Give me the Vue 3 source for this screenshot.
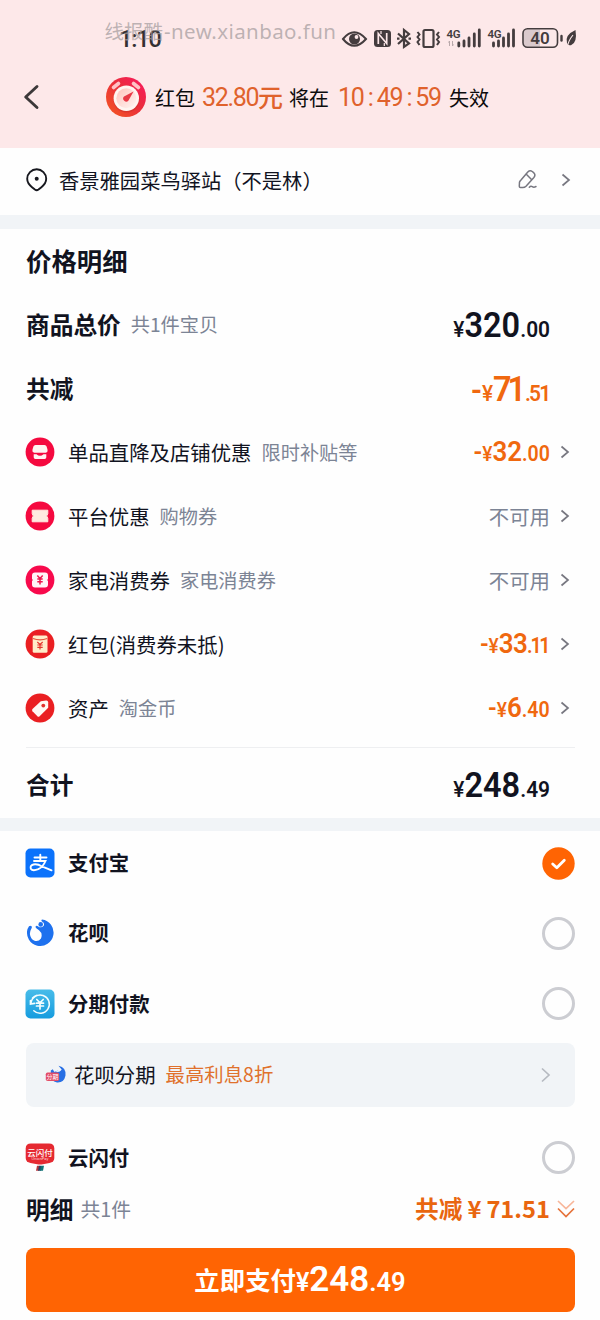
<script setup>
const discounts = [
  { icon: 'shop', color: '#f5093f', name: '单品直降及店铺优惠', note: '限时补贴等', int: '32', dec: '.00' },
  { icon: 'ticket', color: '#f5093f', name: '平台优惠', note: '购物券' },
  { icon: 'coupon', color: '#f80a4c', name: '家电消费券', note: '家电消费券' },
  { icon: 'packet', color: '#ea1f22', name: '红包(消费券未抵)', note: '', int: '33', dec: '.11' },
  { icon: 'tag', color: '#ea1f22', name: '资产', note: '淘金币', int: '6', dec: '.40' },
]
</script>

<template>
  <div class="page">
    <header class="top">
      <div class="status">
        <span class="clock">1:10</span>
        <svg class="status-icons" width="240" height="26" viewBox="340 25 240 26" fill="none" stroke="#443c3e">
          <path d="M343 39Q354 25.500 366 39Q354 52.500 343 39Z" stroke-width="2" />
          <circle cx="354.500" cy="39" r="5.500" fill="#443c3e" stroke="none" />
          <circle cx="356.500" cy="37" r="1.900" fill="#fde8e9" stroke="none" />
          <rect x="374" y="30" width="17" height="17" rx="3.500" fill="#443c3e" stroke="none" />
          <path d="M378.300 44V33.500L386.700 43.500V33" stroke="#fde8e9" stroke-width="1.700" />
          <path d="M381 31V34M384.300 43V46" stroke="#fde8e9" stroke-width="1.200" />
          <path d="M398 33.500L409 43.500L404 47V30L409 34L398 44" stroke-width="2.200" />
          <path d="M397 38.700h2.500M408.500 38.700h2.500" stroke-width="2.200" />
          <rect x="423.500" y="30" width="10" height="17" rx="1.500" stroke-width="2.200" />
          <path d="M417.500 32l2 2.500-2 2.500 2 2.500-2 2.500 2 3M439 32l-2 2.500 2 2.500-2 2.500 2 2.500-2 3" stroke-width="2" />
          <g fill="#443c3e" stroke="none" font-family="Roboto, sans-serif" font-size="11.500" font-weight="600">
            <text x="446.500" y="38" textLength="14">4G</text>
            <text x="487.500" y="38" textLength="14">4G</text>
          </g>
          <path d="M458.800 43v3M464 41v5M469 38v8M474.300 34v12M479.300 30v16M493.500 43v3M498.500 41v5M503.500 38v8M508.500 34v12M513.500 30v16" stroke-width="2.800" stroke-linecap="round" />
          <path d="M449.500 46v-5l-1 1.500M452.500 41v5l1-1.500" stroke="#b9a9ab" stroke-width="1" />
          <path d="M527 29.500h13v17h-13q-3.500 0-3.500-3.500v-10q0-3.500 3.500-3.500Z" fill="#dac9cc" stroke="none" />
          <rect x="523" y="28.800" width="34.500" height="18.400" rx="4.500" stroke-width="1.600" />
          <text x="540" y="44" text-anchor="middle" fill="#443c3e" stroke="none" font-family="Roboto, sans-serif" font-size="17" font-weight="600">40</text>
          <path d="M561.500 36v4.500" stroke-width="2.400" stroke-linecap="round" />
          <path d="M575.500 30Q577.500 43 571 45.200Q567.500 46 567 43Q564.500 35 575.500 30Z" fill="#443c3e" stroke="none" />
          <path d="M573 35Q568 41 567.500 47" stroke="#fde8e9" stroke-width="1.100" />
        </svg>
        <span class="watermark">线报酷<span>-new.xianbao.fun</span></span>
      </div>
      <div class="notice">
        <svg class="back" width="18" height="28" viewBox="0 0 18 28"><path d="M15 3.500L3.700 14 15 24.500" fill="none" stroke="#3c3839" stroke-width="2.900" stroke-linecap="round" stroke-linejoin="round" /></svg>
        <svg class="timer" width="42" height="42" viewBox="0 0 42 42">
          <defs>
            <linearGradient id="ring" x1="0" y1="1" x2="1" y2="0"><stop offset="0" stop-color="#f4591f" /><stop offset=".55" stop-color="#ea2d3c" /><stop offset="1" stop-color="#fb1762" /></linearGradient>
            <linearGradient id="dial" x1="0" y1="0" x2="1" y2="1"><stop offset="0" stop-color="#ffc3bc" /><stop offset="1" stop-color="#fff6f2" /></linearGradient>
          </defs>
          <circle cx="21" cy="21" r="20" fill="url(#ring)" />
          <path d="M8.500 11.500l5-4M28.500 7.500l5 4" stroke="#ffc2c5" stroke-width="3.600" stroke-linecap="round" />
          <circle cx="21.500" cy="23.500" r="13" fill="#c92b25" opacity=".5" />
          <circle cx="21.300" cy="22.300" r="12.700" fill="#fff5f0" />
          <circle cx="21.300" cy="22.300" r="10" fill="url(#dial)" />
          <path d="M28.500 15.500L23.500 24.500A3 3 0 1 1 19 20.500Z" fill="#e83945" />
        </svg>
        <span class="n-text">红包</span>
        <span class="n-num money">32.80</span>
        <span class="n-yuan">元</span>
        <span class="n-text when">将在</span>
        <span class="n-num clockdown"><i>10</i><i>:</i><i>49</i><i>:</i><i>59</i></span>
        <span class="n-text">失效</span>
      </div>
    </header>

    <section class="address">
      <svg width="22" height="24" viewBox="0 0 22 24" fill="none" stroke="#17181f" stroke-width="1.900"><path d="M6 19.200C3 16.800 1.200 14 1.200 10.800A9.500 9.500 0 0 1 20.200 10.800C20.200 14 18.400 16.800 15.400 19.200L12.500 21.600Q10.700 23 8.900 21.600Z" /><circle cx="10.700" cy="10.800" r="2" fill="#17181f" stroke="none" /></svg>
      <span class="addr-text">香景雅园菜鸟驿站（不是林）</span>
      <svg class="edit" width="20" height="22" viewBox="0 0 20 22" fill="none" stroke="#777780" stroke-width="1.500" stroke-linejoin="round" stroke-linecap="round"><path d="M1.500 13Q2 12 3 11L9.800 3Q12 .8 14.300 2.500L15.900 3.900Q17.900 6 15.900 8.400L8 17.300Q6.500 18.700 4.500 18.600H2.500Q1.200 18.500 1.300 17Z" /><path d="M8.300 5.300L13.500 10.500M11.300 18.200q1.500-1.500 3-.5t3.700-.2" /></svg>
      <svg class="arrow" width="10" height="14" viewBox="0 0 10 14"><path d="M1.500 1.500L8 7 1.500 12.500" /></svg>
    </section>

    <section class="detail">
      <div class="row"><h2>价格明细</h2></div>
      <div class="row">
        <h3>商品总价</h3><span class="note">共1件宝贝</span>
        <span class="price large"><small>¥</small><b>320</b><em>.00</em></span>
      </div>
      <div class="row">
        <h3>共减</h3>
        <span class="price large orange tight"><u>-</u><small>¥</small><b>71</b><em>.51</em></span>
      </div>
      <div v-for="d in discounts" :key="d.name" class="row item">
        <svg class="badge" width="30" height="30" viewBox="0 0 30 30">
          <circle cx="15" cy="15" r="14.400" :fill="d.color" />
          <g v-if="d.icon === 'shop'">
            <path d="M10.500 8h9q1.700 0 2.200 1.700l.9 3.200q.3 2.600-1.900 2.800H9.300q-2.200-.2-1.900-2.800l.9-3.200Q8.800 8 10.500 8Z" fill="#fff3f1" />
            <path d="M8.700 17.300h2.800q1.700 1.500 3.500 1.500t3.500-1.500h2.800v2.900q0 1.700-1.700 1.700h-9.200q-1.700 0-1.700-1.700Z" fill="#fff3f1" />
          </g>
          <path v-else-if="d.icon === 'ticket'" d="M7.200 9.200h15.600v3.600q-2.200 2.200 0 4.400v3.600H7.200v-3.600q2.200-2.200 0-4.400Z" fill="#ffebe0" stroke="#ffebe0" stroke-width="1" stroke-linejoin="round" />
          <g v-else-if="d.icon === 'coupon'">
            <path d="M10 7.500h10q3 0 3 3v3.200q-1.500 1.300 0 2.600v3.200q0 3-3 3H10q-3 0-3-3v-3.200q1.500-1.300 0-2.600v-3.200q0-3 3-3Z" fill="#fff6f7" />
            <path d="M12.300 10.500l2.700 3 2.700-3M12.300 14h5.400M12.300 16.700h5.400M15 13.500v6" fill="none" stroke="#ee174d" stroke-width="1.500" />
          </g>
          <g v-else-if="d.icon === 'packet'">
            <rect x="7.700" y="6.500" width="14.800" height="17.200" rx="1.500" fill="#ffedc9" />
            <path d="M8 9.500q7 2.800 14.200 0" fill="none" stroke="#e7563c" stroke-width="1.100" />
            <path d="M12.300 13l2.700 2.500 2.700-2.500M12.300 16h5.400M12.300 18.300h5.400M15 15.500v5" fill="none" stroke="#e6372e" stroke-width="1.200" />
          </g>
          <g v-else>
            <path d="M15.800 8.300l5.400-.7q2-.1 2 1.900v5.200l-8.600 8.500q-1.100 1-2.200 0l-4.900-5q-1-1.100 0-2.200Z" fill="#fff8f4" />
            <circle cx="18.300" cy="12.600" r="1.900" fill="#e2312c" />
          </g>
        </svg>
        <span class="name">{{ d.name }}</span>
        <span v-if="d.note" class="note">{{ d.note }}</span>
        <span v-if="d.int" class="price orange" :class="{ ones: d.dec === '.11' }"><u>-</u><small>¥</small><b>{{ d.int }}</b><em>{{ d.dec }}</em></span>
        <span v-else class="none">不可用</span>
        <svg class="arrow" width="10" height="14" viewBox="0 0 10 14"><path d="M1.500 1.500L8 7 1.500 12.500" /></svg>
      </div>
      <div class="row total">
        <h3>合计</h3>
        <span class="price large"><small>¥</small><b>248</b><em>.49</em></span>
      </div>
    </section>

    <section class="pay">
      <div class="method">
        <svg width="30" height="30" viewBox="0 0 30 30"><rect x=".5" y=".5" width="29" height="29" rx="5" fill="#0b72fb" /><g fill="none" stroke="#fff" stroke-width="1.900" stroke-linecap="round"><path d="M9.500 9.500h12M15.300 6.800v6M9 13h11.500Q18 19 13.300 21.200 7.500 23.500 5.800 20.700 4.800 17.600 8.500 16.500 12.500 15.700 17 18.500L26.500 22.300" /></g></svg>
        <strong>支付宝</strong>
        <svg class="radio" width="33" height="33" viewBox="0 0 33 33"><circle cx="16.500" cy="16.500" r="16.200" fill="#ff6403" /><path d="M10.700 17l4.100 3.700 7.500-7.500" fill="none" stroke="#fff" stroke-width="2.800" stroke-linecap="round" stroke-linejoin="round" /></svg>
      </div>
      <div class="method">
        <svg width="30" height="30" viewBox="0 0 30 30"><path d="M17 1.500A13.300 13.300 0 1 1 2.500 11L4 8.300Q5.200 7.200 6.600 8.300Q7.300 9.300 6.200 11Q4.800 13.500 4.900 16Q5.500 21 9.500 22.800Q13.500 24 16 20.500Q18 15.500 14 12.300L11.300 10.300Q9.900 8.900 11 7.900Q12 7.300 13.200 8.500Q16.500 10.500 18.700 7.800Q20 4.800 17 3.400Q15.800 2.300 17 1.500Z" fill="#1e71ee" /><circle cx="15.700" cy="6.400" r="2.300" fill="#1e71ee" /></svg>
        <strong>花呗</strong><i class="radio" />
      </div>
      <div class="method">
        <svg width="30" height="30" viewBox="0 0 30 30"><defs><linearGradient id="sky" x2="0" y2="1"><stop stop-color="#48bce9" /><stop offset="1" stop-color="#159cdf" /></linearGradient></defs><rect x=".5" y=".5" width="29" height="29" rx="5" fill="url(#sky)" /><g fill="none" stroke="#f3fdff" stroke-linecap="round"><path d="M6 14A9.200 9.200 0 1 1 8.800 21.800M7.500 9A9.200 9.200 0 0 1 12 6.200" stroke-width="1.500" /><path d="M5.500 11.500v3.600l4-.7" stroke-width="1.700" /><path d="M11.800 10.500l3.200 3.300 3.200-3.300M11.500 14.200h7M11.500 17h7M15 13.800v6.200" stroke-width="1.700" /></g></svg>
        <strong>分期付款</strong><i class="radio" />
      </div>
      <div class="plan">
        <svg width="22" height="20" viewBox="0 0 22 20"><path d="M13.500.7Q21.500 2.500 20.500 10.500 19 18 12 17.500 5.500 16.500 5.800 9V5.500l2-1.200 1.500 2.700 3-1.500 1.800.8 2.500-1.800Z" fill="#286fe4" /><path d="M10.500 5.500q3 2 5.500-1.200" stroke="#eef6ff" stroke-width="1.500" fill="none" /><rect x=".8" y="7.500" width="13.300" height="8.500" rx="1.700" fill="#e34d68" /><text x="7.400" y="14.200" text-anchor="middle" font-family="'Noto Sans CJK SC', sans-serif" font-size="6" fill="#fff">分期</text></svg>
        <span>花呗分期</span><span class="offer">最高利息8折</span>
        <svg class="arrow light" width="12" height="16" viewBox="0 0 12 16"><path d="M2 1.500L9 8 2 14.500" /></svg>
      </div>
      <div class="method union">
        <svg width="30" height="30" viewBox="0 0 30 30"><path d="M6 .5h18q5.300 0 5.300 5v9.500q0 4-4.800 5l-8 1.500h-3l-8-1.500Q.7 19 .7 15V5.500q0-5 5.300-5Z" fill="#e52931" /><text x="15" y="12.500" text-anchor="middle" font-family="'Noto Sans CJK SC', sans-serif" font-size="8.500" font-weight="500" fill="#fff">云闪付</text><text x="15" y="17.200" text-anchor="middle" font-family="Roboto, sans-serif" font-size="4" fill="#ffd3d5">UnionPay</text><path d="M12 22.800h2.300v5h-3.300Z" fill="#b8343c" /><path d="M14 22.800h2v5h-3Z" fill="#244366" /><path d="M16 22.800h3l-1 5h-3Z" fill="#127477" /></svg>
        <strong>云闪付</strong><i class="radio" />
      </div>
    </section>

    <footer>
      <div class="summary">
        <h3>明细</h3><span class="note">共1件</span>
        <span class="saved">共减<span class="yen">¥</span><span class="sum">71.51</span></span>
        <svg width="18" height="20" viewBox="0 0 18 20" fill="none" stroke-width="1.700"><path d="M1 2L9 9.500 17 2" stroke="#f8b69a" /><path d="M1 9.500L9 17.500 17 9.500" stroke="#e6733b" /></svg>
      </div>
      <button><span>立即支付</span><span class="price large"><small>¥</small><b>248</b><em>.49</em></span></button>
    </footer>
  </div>
</template>

<style>
body { margin: 0; background: #fefefe; }
</style>

<style scoped>
* { box-sizing: border-box; }
.page { width: 600px; height: 1320px; overflow: hidden; background: #fefefe; color: #11131f; font-family: "Noto Sans CJK SC", sans-serif; }
svg { display: block; flex: none; }
h2, h3 { margin: 0; padding-bottom: 1px; font-weight: 700; white-space: nowrap; }
h2 { font-size: 25.4px; }
h3 { font-size: 23.7px; }
i, em, u { font-style: normal; text-decoration: none; }
.top { height: 148px; background: #fde8e9; }
.status { position: relative; display: flex; height: 70px; padding: 25px 20px 0 119px; }
.clock { padding-top: 1px; font: 500 23.5px/27px Roboto, sans-serif; color: #343032; letter-spacing: -1.1px; }
.status-icons { margin-left: auto; }
.watermark { position: absolute; left: 104.500px; top: 17px; font: 19.5px/28px "Noto Sans", "Noto Sans CJK SC", sans-serif; color: rgba(164, 156, 158, .72); white-space: nowrap; }
.watermark span { margin-left: 1px; font-size: 20.5px; letter-spacing: .4px; }
.notice { display: flex; align-items: center; height: 54px; padding-left: 22px; color: #0c0b0c; }
.timer { margin: 0 8px 0 65px; }
.n-text { font-size: 20px; }
.n-num, .n-yuan { color: #e0622c; }
.n-num { font-family: Roboto, sans-serif; font-size: 25px; font-weight: 400; }
.money { width: 57px; margin-left: 7px; margin-right: -1px; letter-spacing: -1.3px; }
.n-yuan { font-size: 25px; font-weight: 500; line-height: 54px; margin-top: -3px; }
.when { margin-left: 6px; }
.clockdown { display: flex; justify-content: space-between; width: 103px; margin: 0 8px 0 9px; letter-spacing: -1.2px; }
.address { display: flex; align-items: center; height: 67px; padding: 0 29.500px 3px 26px; }
.addr-text { margin-left: 11px; padding-bottom: 1px; font-size: 20.3px; white-space: nowrap; }
.edit { margin-left: auto; }
.arrow path { fill: none; stroke: #777780; stroke-width: 1.7; }
.edit + .arrow { margin-left: 22.500px; }
.detail { height: 616px; padding: 0 25px 0 26px; border-top: 14px solid #f1f4f7; border-bottom: 13px solid #f1f4f7; }
.row { position: relative; display: flex; align-items: center; height: 64px; padding-bottom: 2px; }
.note { margin-left: 10px; padding-bottom: 1px; color: #7c8495; font-size: 19.2px; white-space: nowrap; }
.badge { margin-left: -1px; }
.name { margin-left: 13px; padding-bottom: 1px; font-size: 20.4px; white-space: nowrap; }
.none { margin-left: auto; margin-right: 10px; color: #7c8495; font-size: 20.4px; }
.item .arrow { margin-right: 5px; }
.price { display: flex; align-items: baseline; margin-left: auto; margin-right: 10px; font-family: Roboto, sans-serif; font-weight: 600; line-height: 40px; transform: translateY(1px) scaleX(.91); transform-origin: right; }
.price b { font-size: 28.5px; font-weight: 600; }
.price em { font-size: 21.5px; font-weight: 600; }
.price small { font-size: 21px; font-weight: 500; }
.price u { font-size: 26px; }
.ones em { letter-spacing: -2.5px; margin-right: 1.500px; }
.ones b { letter-spacing: -.7px; }
.large { margin-right: 25px; transform: translateY(2.500px) scaleX(.93); }
.large b { font-size: 35px; }
.large em { font-size: 22.5px; }
.large small { font-size: 22.5px; }
.large u { font-size: 32px; }
.tight b { letter-spacing: -4.3px; margin-right: 3px; }
.tight em { letter-spacing: -2px; margin-right: 1px; }
.orange { color: #f0680f; }
.total { height: 77px; margin-top: 5px; padding-bottom: 0; }
.total::before { content: ""; position: absolute; top: .5px; left: 0; right: 0; height: 1px; background: #eeeff1; }
.method { display: flex; align-items: center; height: 70.5px; padding: 0 25px; }
.method:first-child { height: 67px; padding-bottom: 3px; }
.method strong { margin-left: 13px; padding-bottom: 2px; font-size: 20.4px; font-weight: 700; }
.radio { width: 33px; height: 33px; margin-left: auto; }
i.radio { border: 3px solid #cccdd2; border-radius: 50%; }
.plan { display: flex; align-items: center; height: 63.5px; margin: 4px 25px 0 26px; padding: 0 23px 0 19px; border-radius: 8px; background: #f1f4f7; font-size: 20.4px; }
.plan > span { margin-left: 7px; padding-bottom: 2px; }
.plan > .offer { margin-left: 10px; color: #e0712c; font-size: 19.4px; }
.light { margin-left: auto; }
.light path { stroke: #b6bac1; }
.union { height: 50px; margin-top: 26px; }
.summary { display: flex; align-items: center; height: 54px; padding: 0 25px 1px 26px; }
.summary .note { margin-left: 7px; font-size: 19.8px; }
.saved { display: flex; margin-left: auto; margin-right: 7px; padding-bottom: 2px; color: #e9660f; font-size: 23.7px; font-weight: 700; }
.yen { margin: 0 5px; }
button { display: flex; align-items: center; justify-content: center; width: 549px; height: 64px; margin: 11.500px 0 0 25.500px; padding: 0 0 2px; border: 0; border-radius: 8px; background: #ff6403; color: #fff; font-family: inherit; font-size: 25.4px; font-weight: 700; }
button .price { margin: 0; transform: translateY(2px); }
button .price em { font-size: 25.5px; }
button .price small { font-size: 25px; font-weight: 600; }
</style>
